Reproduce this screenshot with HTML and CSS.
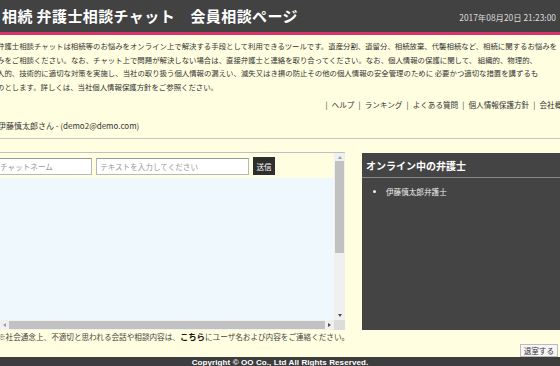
FILE: index.html
```html
<!DOCTYPE html>
<html lang="ja">
<head>
<meta charset="utf-8">
<title>相続 弁護士相談チャット 会員相談ページ</title>
<link rel="stylesheet" href="styles.css">
</head>
<body>
<header class="topbar">
  <h1 class="title">相続 弁護士相談チャット　会員相談ページ</h1>
  <div class="date">2017年08月20日 21:23:00</div>
</header>

<div class="intro">
  <p class="line">弁護士相談チャットは相続等のお悩みをオンライン上で解決する手段として利用できるツールです。遺産分割、遺留分、相続放棄、代襲相続など、相続に関するお悩みを</p>
  <p class="line">みをご相談ください。なお、チャット上で問題が解決しない場合は、直接弁護士と連絡を取り合ってください。なお、個人情報の保護に関して、 組織的、物理的、</p>
  <p class="line">人的、技術的に適切な対策を実施し、当社の取り扱う個人情報の漏えい、滅失又はき損の防止その他の個人情報の安全管理のために 必要かつ適切な措置を講ずるも</p>
  <p class="line">のとします。詳しくは、当社個人情報保護方針をご参照ください。</p>
</div>

<nav class="links">| ヘルプ | ランキング | よくある質問 | 個人情報保護方針 | 会社概要 |</nav>

<div class="user">伊藤慎太郎さん - (demo2@demo.com)</div>
<hr class="rule">

<main class="main">
  <section class="chat">
    <div class="chat-body">
      <div class="inputs">
        <input class="in in-name" type="text" placeholder="チャットネーム">
        <input class="in in-text" type="text" placeholder="テキストを入力してください">
        <button class="send">送信</button>
      </div>
      <div class="log"></div>
    </div>
    <div class="vscroll">
      <span class="arrow up"></span>
      <span class="vthumb"></span>
      <span class="arrow down"></span>
    </div>
    <div class="hscroll">
      <span class="arrow left"></span>
      <span class="hthumb"></span>
      <span class="arrow right"></span>
    </div>
    <div class="corner"></div>
  </section>
  <aside class="online">
    <h2 class="online-title">オンライン中の弁護士</h2>
    <ul class="online-list">
      <li>伊藤慎太郎弁護士</li>
    </ul>
  </aside>
</main>

<p class="notice">※社会通念上、不適切と思われる会話や相談内容は、<b class="here">こちら</b>にユーザ名および内容をご連絡ください。</p>
<div class="actions"><button class="leave">退室する</button></div>

<footer class="footer">Copyright © OO Co., Ltd All Rights Reserved.</footer>
</body>
</html>
```

FILE: styles.css
```css
html, body {
  margin: 0;
  padding: 0;
}
body {
  width: 560px;
  height: 366px;
  overflow: hidden;
  background: #fffee0;
  font-family: "Noto Sans CJK JP", "Noto Sans", sans-serif;
  color: #333;
}
.topbar {
  height: 32px;
  background: #424242;
  border-bottom: 3px solid #d8346b;
  display: flex;
  align-items: center;
  justify-content: space-between;
  padding: 0 4px 0 2px;
}
.title {
  margin: 0;
  font-size: 15px;
  font-weight: bold;
  color: #fff;
  letter-spacing: 0.4px;
  line-height: 1;
  white-space: nowrap;
  padding-bottom: 2px;
}
.date {
  font-size: 8.4px;
  color: #ddd;
  white-space: nowrap;
  padding-top: 2px;
}
.intro {
  padding-top: 4px;
  overflow: hidden;
}
.line {
  margin: 0;
  font-size: 7.4px;
  line-height: 13.5px;
  white-space: nowrap;
  text-indent: -3px;
  color: #333;
}
.links {
  margin-top: 5px;
  margin-right: -16px;
  text-align: right;
  white-space: nowrap;
  font-size: 7.6px;
  word-spacing: 2.4px;
  line-height: 13px;
  color: #333;
}
.user {
  margin-top: 8px;
  font-size: 8px;
  line-height: 13px;
  text-indent: -2px;
  color: #333;
  white-space: nowrap;
}
.rule {
  margin: 6px 0 0;
  border: 0;
  border-top: 1px solid #c8c8c0;
  height: 0;
}
.main {
  display: flex;
  margin-top: 13px;
  height: 178px;
}
.chat {
  width: 345px;
  border-top: 1px solid #c0c0c0;
  display: grid;
  grid-template-columns: 1fr 11px;
  grid-template-rows: 1fr 10px;
}
.chat-body {
  display: flex;
  flex-direction: column;
}
.inputs {
  display: flex;
  align-items: center;
  height: 25px;
  padding-top: 1px;
  box-sizing: border-box;
  gap: 4px;
}
.in {
  height: 17px;
  box-sizing: border-box;
  border: 1px solid #b8b8b8;
  border-top-color: #999;
  background: #fff;
  font-family: inherit;
  font-size: 7.6px;
  padding: 0 3px;
  color: #333;
}
.in::placeholder {
  color: #999;
}
.in-name {
  width: 96px;
  margin-left: -4px;
}
.in-text {
  width: 153px;
}
.send {
  height: 18px;
  width: 22px;
  padding: 0;
  border: 0;
  background: #2e2e2e;
  color: #fff;
  font-family: inherit;
  font-size: 7.6px;
}
.log {
  flex: 1;
  background: #eef8fd;
}
.vscroll {
  background: #f0f0f0;
  display: flex;
  flex-direction: column;
  align-items: center;
}
.vthumb {
  width: 9px;
  height: 92px;
  background: #c1c1c1;
  margin-top: 2px;
}
.arrow {
  width: 0;
  height: 0;
  border: 2px solid transparent;
}
.arrow.up {
  border-bottom: 3px solid #a0a0a0;
  border-top: 0;
  margin-top: 3px;
}
.arrow.down {
  border-top: 3px solid #505050;
  border-bottom: 0;
  margin-top: auto;
  margin-bottom: 3px;
}
.hscroll {
  background: #f0f0f0;
  display: flex;
  align-items: center;
}
.hthumb {
  flex: 1;
  height: 8px;
  background: #c1c1c1;
  margin: 0 3px;
}
.arrow.left {
  border-right: 3px solid #a0a0a0;
  border-left: 0;
  margin-left: 3px;
}
.arrow.right {
  border-left: 3px solid #505050;
  border-right: 0;
  margin-right: 3px;
}
.corner {
  background: #dcdcdc;
}
.online {
  flex: 1;
  margin-left: 17px;
  margin-top: 1px;
  background: #444;
  color: #fff;
}
.online-title {
  margin: 0;
  font-size: 10px;
  font-weight: bold;
  line-height: 14px;
  padding: 6px 4px 4px;
  border-bottom: 1px solid #8a8a8a;
  white-space: nowrap;
}
.online-list {
  margin: 8px 0 0;
  padding-left: 24px;
  font-size: 7.6px;
  line-height: 12px;
  color: #eee;
}
.notice {
  margin: 0;
  font-size: 7.6px;
  line-height: 12px;
  white-space: nowrap;
  text-indent: -2px;
  color: #444;
}
.here {
  color: #111;
  font-size: 8.4px;
}
.actions {
  display: flex;
  justify-content: flex-end;
  padding-right: 2px;
  margin-top: 1px;
  height: 13px;
}
.leave {
  height: 13px;
  padding: 0 3px;
  border: 1px solid #bbb;
  background: #f6f6f6;
  color: #333;
  font-family: inherit;
  font-size: 7.6px;
  line-height: 11px;
}
.footer {
  height: 10px;
  background: #3d3d3d;
  border-bottom: 1px solid #2f3e4e;
  color: #fff;
  font-family: "Liberation Sans", Arial, sans-serif;
  font-weight: bold;
  font-size: 8px;
  display: flex;
  align-items: center;
  justify-content: center;
  white-space: nowrap;
  letter-spacing: 0.1px;
}
```
